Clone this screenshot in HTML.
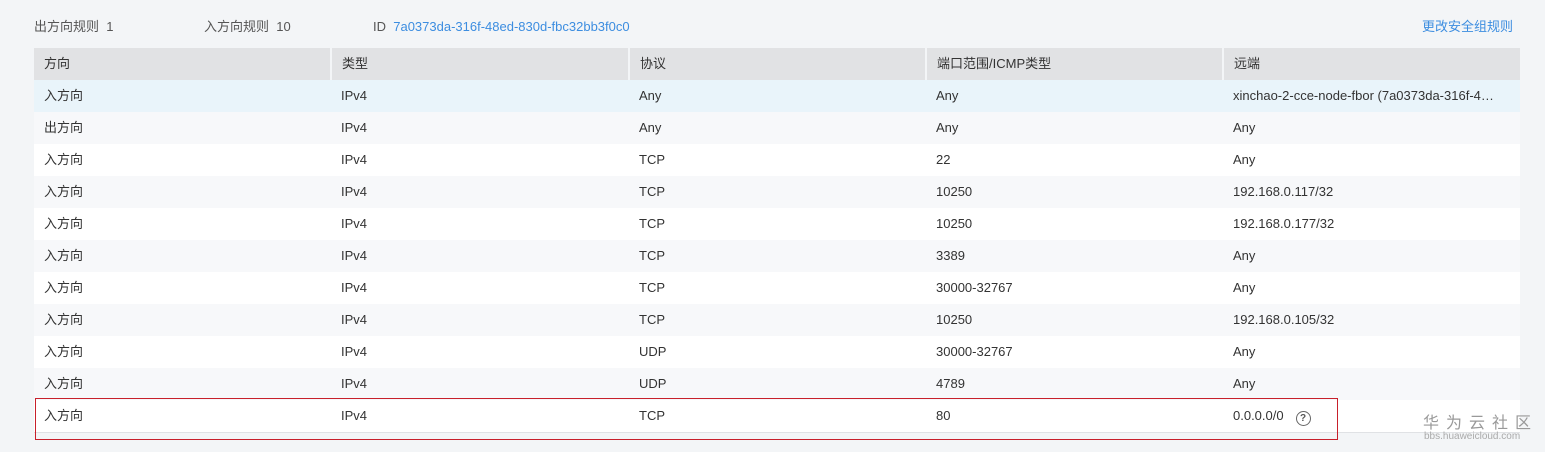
<!DOCTYPE html>
<html><head><meta charset="utf-8"><style>
body{margin:0;width:1545px;height:452px;background:#f3f5f7;font-family:"Liberation Sans","Noto Sans CJK SC",sans-serif;font-size:13px;color:#333;position:relative;overflow:hidden}
.top{position:absolute;top:18px;height:18px;line-height:18px;font-size:13px;color:#555;white-space:nowrap}
a{color:#3c8de0;text-decoration:none}
table{position:absolute;left:34px;top:48px;width:1486px;border-collapse:collapse;table-layout:fixed}
td,th{height:32px;padding:0 8px 0 10px;text-align:left;font-weight:normal;white-space:nowrap;overflow:hidden;text-overflow:ellipsis;line-height:18px}
th{background:#e1e2e4;color:#333;border-left:2px solid #f3f5f7}
th:first-child{border-left:none}
tr.w td{background:#fff}
tr.g td{background:#f7f8fa}
tr.h td{background:#e9f4fa}
tr:last-child td{border-bottom:1px solid #e0e2e5}
.box{position:absolute;z-index:5;left:35px;top:398px;width:1303px;height:42px;border:1px solid #c8202b;box-sizing:border-box}
.q{display:inline-block;width:13px;height:13px;border:1.5px solid #666;border-radius:50%;font-size:10px;line-height:13px;text-align:center;font-weight:bold;color:#555;margin-left:12px;vertical-align:-1px}
.wm{position:absolute;left:1423px;top:409px;color:#999;font-size:16px;letter-spacing:7px;white-space:nowrap}
.wm2{position:absolute;left:1424px;top:431px;color:#aaa;font-size:10px}
</style></head><body>
<div class="top" style="left:34px">出方向规则&nbsp; 1</div>
<div class="top" style="left:204px">入方向规则&nbsp; 10</div>
<div class="top" style="left:373px">ID&nbsp; <a>7a0373da-316f-48ed-830d-fbc32bb3f0c0</a></div>
<div class="top" style="left:1422px"><a>更改安全组规则</a></div>
<table>
<colgroup><col style="width:297px"><col style="width:298px"><col style="width:297px"><col style="width:297px"><col style="width:297px"></colgroup>
<tr><th>方向</th><th>类型</th><th>协议</th><th>端口范围/ICMP类型</th><th>远端</th></tr>
<tr class="h"><td>入方向</td><td>IPv4</td><td>Any</td><td>Any</td><td>xinchao-2-cce-node-fbor (7a0373da-316f-4…</td></tr>
<tr class="g"><td>出方向</td><td>IPv4</td><td>Any</td><td>Any</td><td>Any</td></tr>
<tr class="w"><td>入方向</td><td>IPv4</td><td>TCP</td><td>22</td><td>Any</td></tr>
<tr class="g"><td>入方向</td><td>IPv4</td><td>TCP</td><td>10250</td><td>192.168.0.117/32</td></tr>
<tr class="w"><td>入方向</td><td>IPv4</td><td>TCP</td><td>10250</td><td>192.168.0.177/32</td></tr>
<tr class="g"><td>入方向</td><td>IPv4</td><td>TCP</td><td>3389</td><td>Any</td></tr>
<tr class="w"><td>入方向</td><td>IPv4</td><td>TCP</td><td>30000-32767</td><td>Any</td></tr>
<tr class="g"><td>入方向</td><td>IPv4</td><td>TCP</td><td>10250</td><td>192.168.0.105/32</td></tr>
<tr class="w"><td>入方向</td><td>IPv4</td><td>UDP</td><td>30000-32767</td><td>Any</td></tr>
<tr class="g"><td>入方向</td><td>IPv4</td><td>UDP</td><td>4789</td><td>Any</td></tr>
<tr class="w"><td>入方向</td><td>IPv4</td><td>TCP</td><td>80</td><td>0.0.0.0/0<span class="q">?</span></td></tr>
</table>
<div class="box"></div>
<div class="wm">华为云社区</div>
<div class="wm2">bbs.huaweicloud.com</div>
</body></html>
